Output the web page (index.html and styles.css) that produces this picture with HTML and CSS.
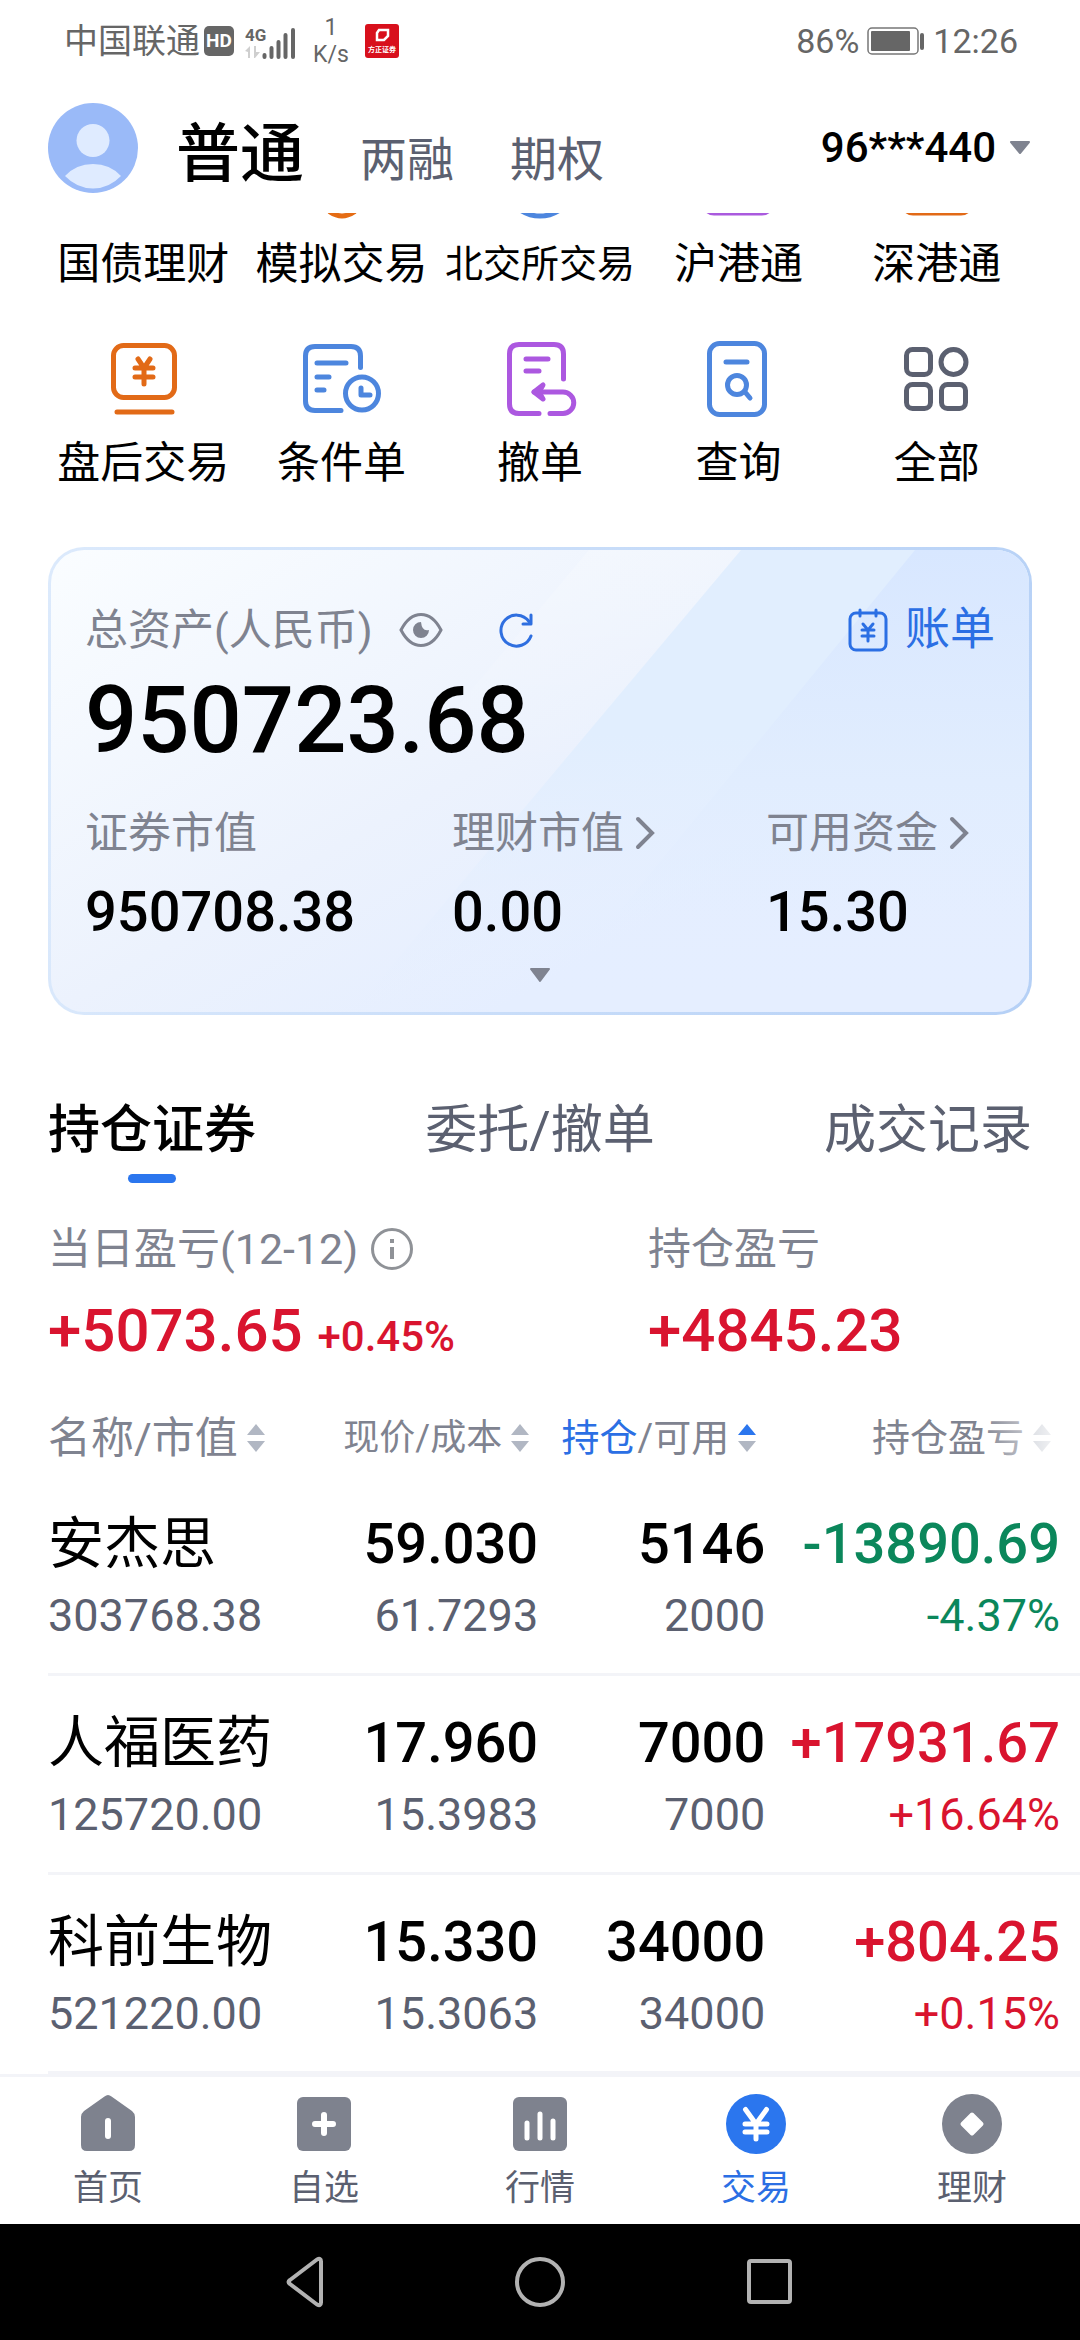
FILE: index.html
```html
<!DOCTYPE html>
<html lang="zh-CN">
<head>
    <title>交易</title>
    <meta charset="UTF-8">
    <meta name="viewport" content="width=device-width, initial-scale=1">
    <link rel="stylesheet" href="styles.css">
</head>
<body>

    <!-- Status bar -->
    <div class="status-bar">
        <div class="status-left">
            <span>中国联通</span>
            <span class="hd-badge">HD</span>
            <svg class="signal" width="52" height="36" viewBox="0 -4 52 36">
                <text x="0" y="14" class="signal-text">4G</text>
                <path d="M0 24l5-5v12H3v-6zM9 19h2v6h4l-5 6H9z" fill="#cfcfcf"/>
                <path d="M19.500 28v2M26.500 21v9M33.500 15v15M40.500 8v22M48 3v27" stroke="#666" stroke-width="4" stroke-linecap="round"/>
            </svg>
            <span class="net-speed">1<br>K/s</span>
            <svg width="34" height="34" viewBox="0 0 34 34">
                <rect width="34" height="34" rx="3" fill="#d8101c"/>
                <path d="M14 6h9v6l-4 4h-7V9z" fill="none" stroke="#fff" stroke-width="2.500"/>
                <text x="17" y="28" text-anchor="middle" class="app-text">方正证券</text>
            </svg>
        </div>
        <div class="status-right">
            <span>86%</span>
            <svg width="58" height="28" viewBox="0 0 58 28">
                <rect x="1" y="1" width="50" height="26" rx="4" fill="none" stroke="#777" stroke-width="1.500"/>
                <rect x="4" y="4" width="39" height="20" rx="1" fill="#666"/>
                <rect x="53" y="6" width="4" height="17" rx="2" fill="#666"/>
            </svg>
            <span>12:26</span>
        </div>
    </div>

    <!-- Account header -->
    <header class="top-bar">
        <svg class="avatar" width="90" height="90" viewBox="0 0 90 90">
            <circle cx="45" cy="45" r="45" fill="#9abaf8"/>
            <circle cx="45" cy="37.500" r="16.500" fill="#dfebff"/>
            <path d="M17 73q11-12 28-12t28 12q-12 12.500-28 12.500T17 73z" fill="#dfebff"/>
        </svg>
        <button class="account-type active" type="button">普通</button>
        <button class="account-type" type="button">两融</button>
        <button class="account-type" type="button">期权</button>
        <button class="account-number" type="button">
            96***440
            <svg width="24" height="16" viewBox="0 0 24 16"><path d="M3 2h18l-9 11z" fill="#7f8390" stroke="#7f8390" stroke-width="2" stroke-linejoin="round"/></svg>
        </button>
    </header>

    <!-- Scrolling content -->
    <main class="content">
        <nav class="shortcuts">
            <a class="shortcut" href="#">
                <svg width="80" height="80" viewBox="0 0 80 80" stroke="#e26a17"><rect x="10" y="6" width="60" height="60" rx="10"/></svg>
                国债理财
            </a>
            <a class="shortcut" href="#">
                <svg width="80" height="80" viewBox="0 0 80 80" stroke="#e56c14"><path d="M40 4L68 14V46L50 62L28 71Q40 79 52 71L62 60"/></svg>
                模拟交易
            </a>
            <a class="shortcut long" href="#">
                <svg width="80" height="80" viewBox="0 0 80 80" stroke="#4d86de"><circle cx="40" cy="40" r="35"/></svg>
                北交所交易
            </a>
            <a class="shortcut" href="#">
                <svg width="80" height="80" viewBox="0 0 80 80" stroke="#aa5ade"><rect x="6" y="6" width="68" height="66" rx="10"/></svg>
                沪港通
            </a>
            <a class="shortcut" href="#">
                <svg width="80" height="80" viewBox="0 0 80 80" stroke="#e26a17"><rect x="6" y="6" width="68" height="66" rx="10"/></svg>
                深港通
            </a>
            <a class="shortcut" href="#">
                <svg width="80" height="80" viewBox="0 0 80 80" stroke="#e26a17">
                    <rect x="10.500" y="5.500" width="61" height="52" rx="10"/>
                    <path d="M35 19l6 9 6-9M41 28v16M32 28h18M32 37h18M14 72h55"/>
                </svg>
                盘后交易
            </a>
            <a class="shortcut" href="#">
                <svg width="80" height="80" viewBox="0 0 80 80" stroke="#4d86de">
                    <path d="M58.500 27.500V16q0-9.500-9.500-9.500H13q-9.500 0-9.500 9.500v45q0 9.500 9.500 9.500h26M15 23h29M15 37h12M15 50h7"/>
                    <circle cx="60" cy="53.500" r="16.500"/>
                    <path d="M59 48v7h9"/>
                </svg>
                条件单
            </a>
            <a class="shortcut" href="#">
                <svg width="80" height="80" viewBox="0 0 80 80" stroke="#ac58e0">
                    <path d="M63.500 39V14q0-9.500-9.500-9.500H19q-9.500 0-9.500 9.500v50q0 9.500 9.500 9.500h20M26 19h22M26 31h13"/>
                    <path d="M34 52l9-7-4 7 4 7z" fill="#ac58e0"/>
                    <path d="M34 52h29a10.500 10.500 0 0 1 0 21.500H50"/>
                </svg>
                撤单
            </a>
            <a class="shortcut" href="#">
                <svg width="80" height="80" viewBox="0 0 80 80" stroke="#4d86de">
                    <rect x="11.500" y="3.500" width="55" height="71" rx="10"/>
                    <path d="M28 22h21M47 52l5 6"/>
                    <circle cx="39" cy="45" r="9.500"/>
                </svg>
                查询
            </a>
            <a class="shortcut" href="#">
                <svg width="80" height="80" viewBox="0 0 80 80" stroke="#5b6070">
                    <rect x="9.500" y="9.500" width="24" height="25" rx="6"/>
                    <circle cx="56.500" cy="22" r="12.500"/>
                    <rect x="9.500" y="44.500" width="24" height="24" rx="6"/>
                    <rect x="44.500" y="44.500" width="24" height="24" rx="6"/>
                </svg>
                全部
            </a>
        </nav>

        <!-- Total assets -->
        <section class="asset-card">
            <svg class="card-bands" viewBox="0 0 978 462" preserveAspectRatio="none">
                <defs>
                    <linearGradient id="band0" x1="0" y1="0" x2="0" y2="1"><stop offset="0" stop-color="#fff" stop-opacity="0.200"/><stop offset="0.500" stop-color="#fff" stop-opacity="0"/></linearGradient>
                    <linearGradient id="band1" x1="0" y1="0" x2="0" y2="1"><stop offset="0.400" stop-color="#e1eefe"/><stop offset="1" stop-color="#e5eeff" stop-opacity="0"/></linearGradient>
                    <linearGradient id="band2" x1="0" y1="0" x2="0" y2="1"><stop offset="0" stop-color="#d8e7ff"/><stop offset="0.500" stop-color="#e1edfe"/><stop offset="0.900" stop-color="#e5eeff" stop-opacity="0"/></linearGradient>
                </defs>
                <path d="M538 0H978V462H150z" fill="url(#band0)"/>
                <path d="M690 0H978V462H302z" fill="url(#band1)"/>
                <path d="M864 0H978V462H486z" fill="url(#band2)"/>
            </svg>
            <div class="card-head">
                <span>总资产(人民币)</span>
                <button class="icon-btn eye" type="button" aria-label="隐藏金额">
                    <svg width="44" height="36" viewBox="0 0 44 36">
                        <path d="M2 18Q10 2.500 22 2.500T42 18Q34 33.500 22 33.500T2 18z" fill="none" stroke="#7f8390" stroke-width="3"/>
                        <path d="M22 10a8 8 0 1 0 8 8q-7 2-8-8z" fill="#7f8390"/>
                    </svg>
                </button>
                <button class="icon-btn" type="button" aria-label="刷新">
                    <svg width="36" height="36" viewBox="0 0 36 36" fill="none" stroke="#2f6fe0" stroke-width="3" stroke-linecap="round">
                        <path d="M33 24A15.500 15.500 0 1 1 31 9.500"/><path d="M33 3v9h-8" stroke-linejoin="round"/>
                    </svg>
                </button>
                <a class="bill" href="#">
                    <svg width="42" height="46" viewBox="0 0 42 46" fill="none" stroke="#2b6fe4" stroke-width="3" stroke-linecap="round">
                        <rect x="3" y="6" width="36" height="37" rx="6"/>
                        <path d="M13 3v6M29 3v6M16 17l5 6 5-6M15 23h12M15 29h12M21 23v11"/>
                    </svg>
                    账单
                </a>
            </div>
            <div class="total">950723.68</div>
            <div class="stats">
                <div>
                    <div class="stat-label">证券市值</div>
                    <div class="stat-value">950708.38</div>
                </div>
                <div>
                    <a class="stat-label" href="#">理财市值<svg width="20" height="34" viewBox="0 0 20 34"><path d="M3 3l14 14L3 31"/></svg></a>
                    <div class="stat-value">0.00</div>
                </div>
                <div>
                    <a class="stat-label" href="#">可用资金<svg width="20" height="34" viewBox="0 0 20 34"><path d="M3 3l14 14L3 31"/></svg></a>
                    <div class="stat-value">15.30</div>
                </div>
            </div>
            <button class="expand" type="button" aria-label="展开">
                <svg width="24" height="18" viewBox="0 0 24 18"><path d="M3 3h18l-9 12z" fill="#7f8390" stroke="#7f8390" stroke-width="2" stroke-linejoin="round"/></svg>
            </button>
        </section>

        <div class="tabs">
            <button class="tab active" type="button">持仓证券</button>
            <button class="tab" type="button">委托/撤单</button>
            <button class="tab" type="button">成交记录</button>
        </div>

        <section class="profit">
            <div>
                <div class="profit-label">
                    当日盈亏(12-12)
                    <svg width="42" height="42" viewBox="0 0 42 42"><circle cx="21" cy="21" r="19.500" fill="none" stroke="#8f9297" stroke-width="3"/><path d="M21 11v4M21 19v12" stroke="#8f9297" stroke-width="4"/></svg>
                </div>
                <div class="profit-value">+5073.65 <small>+0.45%</small></div>
            </div>
            <div>
                <div class="profit-label">持仓盈亏</div>
                <div class="profit-value">+4845.23</div>
            </div>
        </section>

        <!-- Holdings -->
        <div class="holdings-wrap">
            <table class="holdings">
                <thead>
                    <tr>
                        <th class="col-name"><button type="button">名称/市值<svg class="sort" width="20" height="30" viewBox="0 0 20 30"><path d="M10 1l9 11H1z"/><path d="M10 29l9-11H1z"/></svg></button></th>
                        <th class="col-price"><button type="button">现价/成本<svg class="sort" width="20" height="30" viewBox="0 0 20 30"><path d="M10 1l9 11H1z"/><path d="M10 29l9-11H1z"/></svg></button></th>
                        <th class="col-hold"><button type="button"><span class="sorted">持仓</span>/可用<svg class="sort" width="20" height="30" viewBox="0 0 20 30"><path class="sorted" d="M10 1l9 11H1z"/><path d="M10 29l9-11H1z"/></svg></button></th>
                        <th class="col-profit"><button type="button">持仓盈亏<svg class="sort" width="20" height="30" viewBox="0 0 20 30"><path d="M10 1l9 11H1z"/><path d="M10 29l9-11H1z"/></svg></button></th>
                    </tr>
                </thead>
                <tbody>
                    <tr>
                        <td><div class="name">安杰思</div><div class="sub">303768.38</div></td>
                        <td><div class="num">59.030</div><div class="sub">61.7293</div></td>
                        <td><div class="num">5146</div><div class="sub">2000</div></td>
                        <td class="down"><div class="num">-13890.69</div><div class="sub">-4.37%</div></td>
                    </tr>
                    <tr>
                        <td><div class="name">人福医药</div><div class="sub">125720.00</div></td>
                        <td><div class="num">17.960</div><div class="sub">15.3983</div></td>
                        <td><div class="num">7000</div><div class="sub">7000</div></td>
                        <td class="up"><div class="num">+17931.67</div><div class="sub">+16.64%</div></td>
                    </tr>
                    <tr>
                        <td><div class="name">科前生物</div><div class="sub">521220.00</div></td>
                        <td><div class="num">15.330</div><div class="sub">15.3063</div></td>
                        <td><div class="num">34000</div><div class="sub">34000</div></td>
                        <td class="up"><div class="num">+804.25</div><div class="sub">+0.15%</div></td>
                    </tr>
                </tbody>
            </table>
        </div>
    </main>

    <!-- Bottom tabs -->
    <nav class="bottom-nav">
        <a href="#">
            <svg width="60" height="60" viewBox="0 0 60 60">
                <path d="M26.500 2.500q3.500-3 7 0L54 17q3 2.500 3 6v28q0 6-6 6H9q-6 0-6-6V23q0-3.500 3-6z" fill="#7e828e"/>
                <path d="M30 27v15" stroke="#fff" stroke-width="6" stroke-linecap="round"/>
            </svg>
            首页
        </a>
        <a href="#">
            <svg width="60" height="60" viewBox="0 0 60 60">
                <rect x="3" y="3" width="54" height="54" rx="6" fill="#7e828e"/>
                <path d="M30 21v18M21 30h18" stroke="#fff" stroke-width="6" stroke-linecap="round"/>
            </svg>
            自选
        </a>
        <a href="#">
            <svg width="60" height="60" viewBox="0 0 60 60">
                <rect x="3" y="3" width="54" height="54" rx="6" fill="#7e828e"/>
                <path d="M17 29v15M30 20v24M43 27v17" stroke="#fff" stroke-width="5" stroke-linecap="round"/>
            </svg>
            行情
        </a>
        <a class="active" href="#">
            <svg width="60" height="60" viewBox="0 0 60 60">
                <circle cx="30" cy="30" r="30" fill="#2b76ee"/>
                <path d="M19.500 15.500L30 30l10.500-14.500M19 30h22M19 38h22M30 30v15" fill="none" stroke="#fff" stroke-width="5" stroke-linecap="round"/>
            </svg>
            交易
        </a>
        <a href="#">
            <svg width="60" height="60" viewBox="0 0 60 60">
                <circle cx="30" cy="30" r="30" fill="#7e828e"/>
                <path d="M30 20.500l9.500 9.500-9.500 9.500-9.500-9.500z" fill="#fff" stroke="#fff" stroke-width="4" stroke-linejoin="round"/>
            </svg>
            理财
        </a>
    </nav>

    <!-- System keys -->
    <div class="system-nav">
        <button type="button" aria-label="返回"><svg width="60" height="60" viewBox="0 0 60 60"><path d="M37 7.500q4-2 4 2v41q0 4-4 2L10 32q-3-2 0-4z"/></svg></button>
        <button type="button" aria-label="主屏幕"><svg width="60" height="60" viewBox="0 0 60 60"><circle cx="30" cy="30" r="23"/></svg></button>
        <button type="button" aria-label="最近任务"><svg width="60" height="60" viewBox="0 0 60 60"><rect x="9" y="9" width="41" height="41" rx="2"/></svg></button>
    </div>

</body>
</html>
```
FILE: styles.css
```css
* {
    box-sizing: border-box;
}

body {
    font-family: Roboto, "Noto Sans CJK SC", sans-serif;
    background-color: #fff;
    color: #000;
    margin: 0;
    min-height: 100vh;
    display: flex;
    flex-direction: column;
}

a {
    color: inherit;
    text-decoration: none;
}

button {
    font: inherit;
    color: inherit;
    background: none;
    border: none;
    padding: 0;
    cursor: pointer;
}

svg {
    display: block;
    flex: none;
}

/* Status bar */
.status-bar {
    display: flex;
    justify-content: space-between;
    align-items: center;
    height: 82px;
    padding: 0 62px 0 64px;
    font-size: 34px;
    line-height: 48px;
    color: #666;
}

.status-left,
.status-right {
    display: flex;
    align-items: center;
}

.status-right {
    gap: 8px;
}

.hd-badge {
    margin: 0 11px 0 4px;
    width: 30px;
    height: 30px;
    border-radius: 5px;
    background-color: #666;
    color: #fff;
    font-size: 19px;
    font-weight: 700;
    line-height: 30px;
    text-align: center;
}

.signal-text {
    font-size: 17px;
    font-weight: 700;
    fill: #666;
}

.app-text {
    font-size: 7px;
    font-weight: 700;
    fill: #fff;
}

.net-speed {
    margin: 0 16px;
    font-size: 23px;
    line-height: 27px;
    text-align: center;
}

/* Header */
.top-bar {
    display: flex;
    align-items: center;
    height: 131px;
    padding: 0 48px;
}

.avatar {
    margin-right: 38px;
}

.account-type {
    margin-right: 56px;
    padding-top: 24px;
    font-size: 47px;
    line-height: 60px;
    color: #5b6070;
}

.account-type.active {
    padding-top: 14px;
    font-size: 64px;
    line-height: 72px;
    font-weight: 500;
    color: #000;
}

.account-number {
    display: flex;
    align-items: center;
    gap: 12px;
    margin-left: auto;
    font-size: 42px;
    font-weight: 500;
}

/* Shortcuts, first row is half scrolled under the header */
.content {
    flex: 1;
    overflow: hidden;
}

.shortcuts {
    display: grid;
    grid-template-columns: repeat(5, 1fr);
    row-gap: 46px;
    margin-top: -72px;
    padding: 0 44px;
}

.shortcut {
    display: flex;
    flex-direction: column;
    align-items: center;
    gap: 13px;
    font-size: 43px;
    line-height: 60px;
    white-space: nowrap;
}

.shortcut.long {
    font-size: 38px;
}

.shortcut svg {
    fill: none;
    stroke-width: 5;
    stroke-linecap: round;
    stroke-linejoin: round;
}

/* Asset card */
.asset-card {
    position: relative;
    margin: 54px 48px 0;
    padding: 50px 34px 23px;
    border: 3px solid transparent;
    border-radius: 36px;
    background:
        linear-gradient(150deg, #fafdff 0%, #ecf2fd 45%, #e5eeff 70%) padding-box,
        linear-gradient(100deg, #dceafc, #b5d0f6) border-box;
}

.card-bands {
    position: absolute;
    top: 0;
    left: 0;
    width: 100%;
    height: 100%;
    border-radius: 33px;
}

.card-head,
.total,
.stats,
.expand {
    position: relative;
}

.card-head {
    display: flex;
    align-items: center;
    height: 60px;
    font-size: 43px;
    line-height: 60px;
    color: #7f8390;
}

.icon-btn {
    margin-right: 55px;
}

.icon-btn.eye {
    margin-left: 26px;
}

.bill {
    display: flex;
    align-items: center;
    gap: 16px;
    margin-left: auto;
    font-size: 45px;
    color: #2b6fe4;
}

.total {
    font-size: 92px;
    font-weight: 500;
    line-height: 122px;
}

.stats {
    display: grid;
    grid-template-columns: 367fr 314fr 229fr;
    margin-top: 21px;
}

.stat-label {
    display: flex;
    align-items: center;
    gap: 11px;
    font-size: 43px;
    line-height: 60px;
    color: #7f8390;
}

.stat-label svg {
    fill: none;
    stroke: #7f8390;
    stroke-width: 4;
    stroke-linecap: round;
}

.stat-value {
    font-size: 56px;
    font-weight: 500;
    line-height: 98px;
}

.expand {
    display: flex;
    justify-content: center;
    align-items: center;
    width: 100%;
    height: 28px;
}

/* Tabs */
.tabs {
    display: flex;
    justify-content: space-between;
    margin: 80px 48px 0;
}

.tab {
    position: relative;
    padding-bottom: 16px;
    font-size: 52px;
    line-height: 72px;
    color: #5b6070;
}

.tab.active {
    font-weight: 500;
    color: #000;
}

.tab.active::after {
    content: "";
    position: absolute;
    bottom: 0;
    left: 50%;
    width: 48px;
    height: 9px;
    margin-left: -24px;
    border-radius: 5px;
    background-color: #2b76ee;
}

/* Profit summary */
.profit {
    display: grid;
    grid-template-columns: 600fr 384fr;
    margin: 36px 48px 0;
}

.profit-label {
    display: flex;
    align-items: center;
    gap: 13px;
    font-size: 43px;
    line-height: 60px;
    color: #7f8390;
}

.profit-value {
    font-size: 60px;
    font-weight: 500;
    line-height: 104px;
    color: #d9142f;
}

.profit-value small {
    font-size: 42px;
    line-height: 1;
}

/* Holdings table */
.holdings-wrap {
    margin-top: 16px;
    padding-left: 48px;
}

.holdings {
    width: 100%;
    table-layout: fixed;
    border-spacing: 0;
    text-align: right;
    white-space: nowrap;
}

.holdings th {
    height: 78px;
    padding: 0;
    font-size: 38px;
    line-height: 60px;
    font-weight: 400;
    color: #7f8390;
}

.holdings th button {
    display: flex;
    align-items: center;
    margin-left: auto;
}

.holdings .col-name {
    width: 26%;
    font-size: 43px;
}

.holdings .col-name button {
    margin-left: 0;
}

.holdings .col-price {
    width: 21.5%;
    font-size: 36px;
}

.holdings .col-hold {
    width: 22%;
}

.holdings .col-profit {
    position: relative;
}

.holdings .col-profit::after {
    content: "";
    position: absolute;
    top: 0;
    right: 0;
    width: 100px;
    height: 100%;
    background: linear-gradient(to right, rgba(255, 255, 255, 0), #fff 90%);
}

.sort {
    margin: 0 8px;
    fill: #b1b7c3;
}

.holdings .sorted {
    color: #2b6fe4;
    fill: #2b76ee;
}

.holdings td {
    padding: 31px 0 21px;
    border-bottom: 3px solid #f3f4f8;
}

.holdings td:first-child {
    text-align: left;
}

.holdings th:last-child,
.holdings td:last-child {
    padding-right: 20px;
}

.name {
    font-size: 56px;
    line-height: 72px;
}

.num {
    font-size: 56px;
    font-weight: 500;
    line-height: 72px;
}

.sub {
    font-size: 45px;
    line-height: 72px;
    color: #5b6070;
}

.up,
.up .sub {
    color: #d9142f;
}

.down,
.down .sub {
    color: #0b875b;
}

/* Bottom navigation */
.bottom-nav {
    display: grid;
    grid-template-columns: repeat(5, 1fr);
    padding: 17px 0 11px;
    border-top: 3px solid #f3f4f8;
    font-size: 35px;
    line-height: 48px;
    color: #5b6070;
}

.bottom-nav a {
    display: flex;
    flex-direction: column;
    align-items: center;
    gap: 11px;
}

.bottom-nav .active {
    color: #2b6fe4;
}

.system-nav {
    display: flex;
    justify-content: center;
    align-items: center;
    gap: 170px;
    height: 116px;
    background-color: #000;
}

.system-nav svg {
    fill: none;
    stroke: #b2b2b2;
    stroke-width: 4;
    stroke-linejoin: round;
}
```
